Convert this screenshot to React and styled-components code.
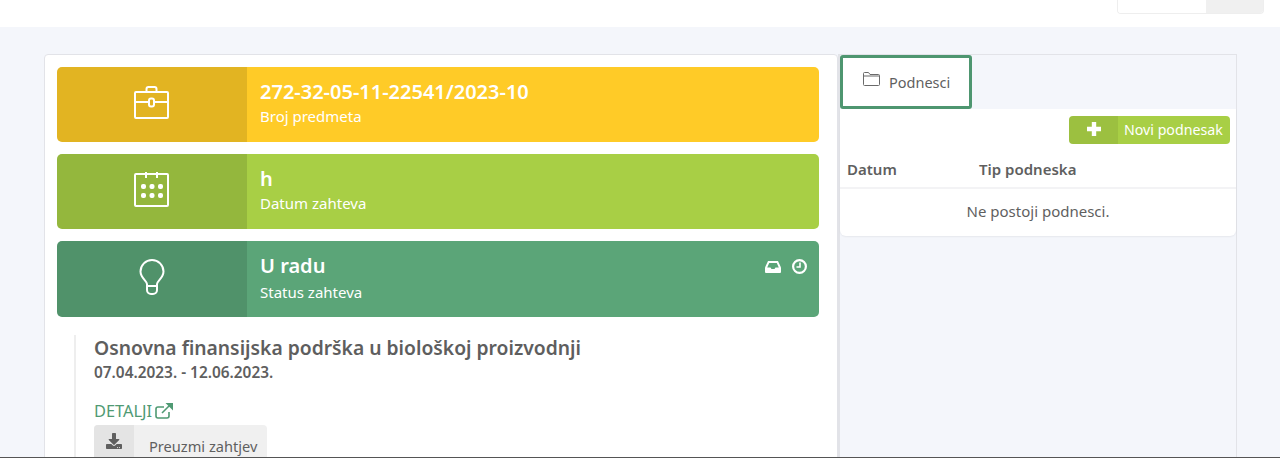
import React from 'react'
import styled, { createGlobalStyle } from 'styled-components'
import { FaDownload } from 'react-icons/fa'

const Global = createGlobalStyle`
  html, body { margin: 0; padding: 0; height: 458px; overflow: hidden; }
  body { background: #f4f6fb; font-family: "Noto Sans", "Open Sans", sans-serif; color: #5f5f5f; }
  * { box-sizing: border-box; }
`

const Page = styled.div`
  height: 458px;
  overflow: hidden;
  border-bottom: 1px solid #555;
`

const TopBar = styled.div`
  height: 27px;
  background: #fff;
  display: flex;
  justify-content: flex-end;
  padding-right: 16px;
`

const TopWidget = styled.div`
  width: 147px;
  height: 14px;
  display: flex;
  border: 1px solid #eeeeee;
  border-top: 0;
  border-radius: 0 0 4px 4px;
  overflow: hidden;
`

const TopWidgetInput = styled.div`
  width: 88px;
  background: #fff;
`

const TopWidgetButton = styled.div`
  flex: 1;
  background: #f0f0f0;
`

const Columns = styled.div`
  display: flex;
  align-items: flex-start;
  margin: 27px 43px 0 44px;
`

const LeftPanel = styled.div`
  width: 794px;
  height: 420px;
  flex: none;
  background: #fff;
  border: 1px solid #e2e3e8;
  border-radius: 4px 4px 0 0;
  padding: 12px 18px 0 12px;
  display: flex;
  flex-direction: column;
  gap: 12px;
`

const Banner = styled.div`
  display: flex;
  height: ${p => p.$h}px;
  background: ${p => p.$bg};
  border-radius: 5px;
  overflow: hidden;
  color: #fff;
  flex: none;
`

const BannerIcon = styled.div`
  width: 190px;
  flex: none;
  background: rgba(0, 0, 0, 0.115);
  display: flex;
  align-items: center;
  justify-content: center;
  padding-bottom: 5px;
`

const BannerBody = styled.div`
  flex: 1;
  padding: 11px 12px 0 13px;
  position: relative;
`

const BannerTitle = styled.div`
  font-size: 20px;
  font-weight: 600;
  line-height: 28px;
`

const BannerLabel = styled.div`
  font-size: 15px;
  line-height: 21px;
  margin-top: ${p => p.$offset || 0}px;
`

const BannerActions = styled.div`
  position: absolute;
  top: 18px;
  right: 12px;
  display: flex;
  gap: 11px;
  align-items: center;
`

const Details = styled.div`
  margin: 6px 0 0 17px;
  padding-left: 18px;
  border-left: 2px solid #eeeeee;
  flex: 1;
`

const Heading = styled.div`
  font-size: 19.3px;
  font-weight: 600;
  line-height: 26px;
  color: #5e5e5e;
`

const Dates = styled.div`
  font-size: 15.4px;
  font-weight: 600;
  line-height: 24px;
  margin-bottom: 15px;
`

const DetailsLink = styled.a`
  display: flex;
  align-items: center;
  gap: 3px;
  font-size: 16.4px;
  line-height: 20px;
  color: #4f9a73;
  height: 25px;
  padding-bottom: 3px;
`

const DownloadButton = styled.div`
  display: flex;
  width: 173px;
  height: 40px;
  background: #f0f0f0;
  border-radius: 4px;
  overflow: hidden;
  font-size: 14.6px;
`

const DownloadIcon = styled.div`
  width: 40px;
  background: #e4e4e4;
  display: flex;
  justify-content: center;
  padding-top: 8px;
  font-size: 16px;
`

const DownloadText = styled.div`
  padding: 11px 0 0 15px;
  line-height: 20px;
`

const RightPanel = styled.div`
  width: 399px;
  height: 420px;
  flex: none;
  border: 1px solid #e2e3e8;
  border-left-width: 2px;
  display: flex;
  flex-direction: column;
`

const Tab = styled.div`
  width: 132px;
  height: 54px;
  background: #fff;
  border: 3px solid #4e9670;
  border-radius: 3px;
  display: flex;
  align-items: center;
  padding: 0 0 0 20px;
  gap: 9px;
  font-size: 14.5px;
`

const TabFolder = styled.span`
  display: flex;
  margin-bottom: 6px;
`

const Card = styled.div`
  background: #fff;
  border-radius: 0 0 6px 6px;
  box-shadow: 0 1px 2px rgba(0, 0, 0, 0.06);
  height: 127px;
  padding-top: 7px;
`

const CardActions = styled.div`
  display: flex;
  justify-content: flex-end;
  padding-right: 6px;
`

const AddButton = styled.div`
  display: flex;
  width: 161px;
  height: 28px;
  border-radius: 4px;
  overflow: hidden;
  background: #a8cf45;
  color: #fff;
  font-size: 14.2px;
  line-height: 28px;
`

const AddIcon = styled.div`
  width: 49px;
  background: rgba(0, 0, 0, 0.07);
  display: flex;
  align-items: center;
  justify-content: center;
  padding-bottom: 2px;
`

const AddText = styled.div`
  padding-left: 6px;
  white-space: nowrap;
`

const TableHead = styled.div`
  display: grid;
  grid-template-columns: 132px 1fr;
  padding: 13px 7px 0;
  height: 45px;
  font-size: 15px;
  font-weight: 600;
  line-height: 24px;
  border-bottom: 2px solid #f3f3f5;
`

const EmptyRow = styled.div`
  text-align: center;
  font-size: 15px;
  line-height: 20px;
  padding-top: 12px;
`

const BriefcaseIcon = () => (
  <svg width="36" height="33" viewBox="0 0 36 33" fill="none" stroke="#fff" strokeWidth="2" strokeLinejoin="round">
    <rect x="1" y="6" width="33" height="26" rx="1" />
    <path d="M12.500 6V3a2 2 0 0 1 2-2h6a2 2 0 0 1 2 2v3" />
    <path d="M1 16h13.500M20.500 16H34" />
    <rect x="15" y="12.500" width="5" height="8" rx="2" />
  </svg>
)

const CalendarIcon = () => (
  <svg width="36" height="36" viewBox="0 0 36 36" fill="none" stroke="#fff" strokeWidth="2" strokeLinejoin="round">
    <rect x="1" y="3" width="33" height="32" rx="1" />
    <path d="M12 1v6M23 1v6" />
    <g fill="#fff" stroke="none">
      <rect x="7" y="13" width="5" height="5" rx="2" />
      <rect x="15.500" y="13" width="5" height="5" rx="2" />
      <rect x="24" y="13" width="5" height="5" rx="2" />
      <rect x="7" y="22" width="5" height="5" rx="2" />
      <rect x="15.500" y="22" width="5" height="5" rx="2" />
      <rect x="24" y="22" width="5" height="5" rx="2" />
    </g>
  </svg>
)

const BulbIcon = () => (
  <svg width="26" height="36" viewBox="0 0 26 36" fill="none" stroke="#fff" strokeWidth="2" strokeLinejoin="round">
    <path d="M8 27v-2c0-3-6.500-6-6.500-12.500a11.500 11.500 0 0 1 23 0C24.500 19 18 22 18 25v2z" />
    <path d="M8 27v4a4 4 0 0 0 4 4h2a4 4 0 0 0 4-4v-4" />
  </svg>
)

const FolderIcon = () => (
  <svg width="17" height="14" viewBox="0 0 17 14" fill="none" stroke="#6a6a6a" strokeWidth="1">
    <path d="M.5 12.500v-11a1 1 0 0 1 1-1h4l1.500 2h8.500a1 1 0 0 1 1 1v9a1 1 0 0 1-1 1h-14a1 1 0 0 1-1-1zM.5 4h16" />
  </svg>
)

const InboxIcon = () => (
  <svg width="16" height="12" viewBox="0 0 16 12">
    <path fill="#fff" d="M3 0h10l3 6.500V11a1 1 0 0 1-1 1H1a1 1 0 0 1-1-1V6.500z" />
    <path fill="#5ba578" d="M4.200 2h7.600l2 4.500h-3.300L9.500 8h-3L5.500 6.500H2.200z" />
  </svg>
)

const ClockIcon = () => (
  <svg width="15" height="15" viewBox="0 0 15 15" fill="none" stroke="#fff">
    <circle cx="7.500" cy="7.500" r="6.400" strokeWidth="2.200" />
    <path d="M8 3.500v4.500H4.500" strokeWidth="1.600" />
  </svg>
)

const ExternalIcon = () => (
  <svg width="18" height="16" viewBox="0 0 18 16" fill="none" stroke="#4f9a73" strokeWidth="1.600">
    <path d="M14 9v4a2 2 0 0 1-2 2H3a2 2 0 0 1-2-2V6a2 2 0 0 1 2-2h6" />
    <path d="M7 10L15 2" />
    <path fill="#4f9a73" stroke="none" d="M10.500 0H18v7.500z" />
  </svg>
)

const PlusIcon = () => (
  <svg width="14" height="14" viewBox="0 0 14 14" fill="none" stroke="#fff" strokeWidth="4.400">
    <path d="M7 0v14M0 7h14" />
  </svg>
)

export default function App() {
  return (
    <Page>
      <Global />
      <TopBar>
        <TopWidget>
          <TopWidgetInput />
          <TopWidgetButton />
        </TopWidget>
      </TopBar>
      <Columns>
        <LeftPanel>
          <Banner $h={75} $bg="#ffcb27">
            <BannerIcon><BriefcaseIcon /></BannerIcon>
            <BannerBody>
              <BannerTitle>272-32-05-11-22541/2023-10</BannerTitle>
              <BannerLabel>Broj predmeta</BannerLabel>
            </BannerBody>
          </Banner>
          <Banner $h={75} $bg="#a8cf45">
            <BannerIcon><CalendarIcon /></BannerIcon>
            <BannerBody>
              <BannerTitle>h</BannerTitle>
              <BannerLabel>Datum zahteva</BannerLabel>
            </BannerBody>
          </Banner>
          <Banner $h={76} $bg="#5ba578">
            <BannerIcon><BulbIcon /></BannerIcon>
            <BannerBody>
              <BannerTitle>U radu</BannerTitle>
              <BannerLabel $offset={2}>Status zahteva</BannerLabel>
              <BannerActions>
                <InboxIcon />
                <ClockIcon />
              </BannerActions>
            </BannerBody>
          </Banner>
          <Details>
            <Heading>Osnovna finansijska podrška u biološkoj proizvodnji</Heading>
            <Dates>07.04.2023. - 12.06.2023.</Dates>
            <DetailsLink>DETALJI <ExternalIcon /></DetailsLink>
            <DownloadButton>
              <DownloadIcon><FaDownload /></DownloadIcon>
              <DownloadText>Preuzmi zahtjev</DownloadText>
            </DownloadButton>
          </Details>
        </LeftPanel>
        <RightPanel>
          <Tab><TabFolder><FolderIcon /></TabFolder> Podnesci</Tab>
          <Card>
            <CardActions>
              <AddButton>
                <AddIcon><PlusIcon /></AddIcon>
                <AddText>Novi podnesak</AddText>
              </AddButton>
            </CardActions>
            <TableHead>
              <div>Datum</div>
              <div>Tip podneska</div>
            </TableHead>
            <EmptyRow>Ne postoji podnesci.</EmptyRow>
          </Card>
        </RightPanel>
      </Columns>
    </Page>
  )
}
